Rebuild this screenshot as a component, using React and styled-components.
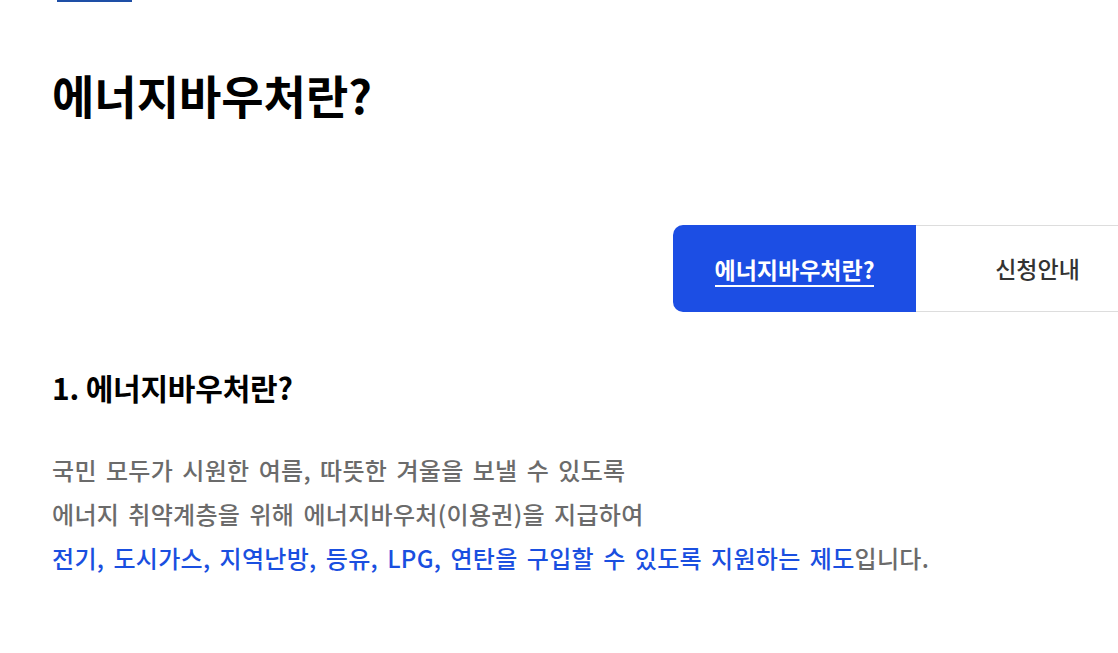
import React from "react";
import styled, { createGlobalStyle } from "styled-components";

const Global = createGlobalStyle`
  html, body { margin: 0; padding: 0; background: #fff; overflow: hidden; }
  body { font-family: "Noto Sans CJK KR", "Noto Sans", sans-serif; }
  * { box-sizing: border-box; }
`;

const Page = styled.div`
  width: 1118px;
  height: 653px;
  overflow: hidden;
  padding-left: 52px;
  display: flex;
  flex-direction: column;
`;

const TopMark = styled.div`
  width: 75px;
  height: 2px;
  margin-left: 5px;
  background: #1e4fa6;
`;

const Title = styled.h1`
  margin: 64px 0 0;
  font-size: 46px;
  line-height: 57px;
  font-weight: 700;
  letter-spacing: 0;
  color: #000;
`;

const TabList = styled.div`
  margin-top: 102px;
  align-self: flex-end;
  margin-right: -41px;
  display: flex;
  height: 87px;
`;

const Tab = styled.div`
  width: 243px;
  display: flex;
  align-items: center;
  justify-content: center;
  font-size: 23px;
  letter-spacing: 0;
  background: ${(p) => (p.$active ? "#1c4ee4" : "#fff")};
  color: ${(p) => (p.$active ? "#fff" : "#333")};
  font-weight: ${(p) => (p.$active ? 700 : 500)};
  border-radius: ${(p) => (p.$active ? "10px 0 0 10px" : "0")};
  border-top: ${(p) => (p.$active ? "none" : "1px solid #ddd")};
  border-bottom: ${(p) => (p.$active ? "none" : "1px solid #ddd")};
`;

const TabLabel = styled.span`
  padding-bottom: 1px;
  border-bottom: ${(p) => (p.$active ? "2px solid #fff" : "none")};
  line-height: 30px;
  margin-top: ${(p) => (p.$active ? "4px" : "0")};
`;

const Heading = styled.h2`
  margin: 56px 0 0;
  font-size: 30px;
  line-height: 38px;
  font-weight: 700;
  letter-spacing: -0.2px;
  color: #000;
`;

const Para = styled.p`
  margin: 42px 0 0;
  font-size: 24px;
  line-height: 44px;
  font-weight: 500;
  letter-spacing: 0.3px;
  word-spacing: 3.5px;
  color: #6b6b6b;
`;

const Blue = styled.span`
  color: #1a4fe0;
`;

export default function App() {
  return (
    <>
      <Global />
      <Page>
        <TopMark />
        <Title>에너지바우처란?</Title>
        <TabList>
          <Tab $active>
            <TabLabel $active>에너지바우처란?</TabLabel>
          </Tab>
          <Tab>
            <TabLabel>신청안내</TabLabel>
          </Tab>
        </TabList>
        <Heading>1. 에너지바우처란?</Heading>
        <Para>
          국민 모두가 시원한 여름, 따뜻한 겨울을 보낼 수 있도록
          <br />
          에너지 취약계층을 위해 에너지바우처(이용권)을 지급하여
          <br />
          <Blue>전기, 도시가스, 지역난방, 등유, LPG, 연탄을 구입할 수 있도록 지원하는 제도</Blue>입니다.
        </Para>
      </Page>
    </>
  );
}
